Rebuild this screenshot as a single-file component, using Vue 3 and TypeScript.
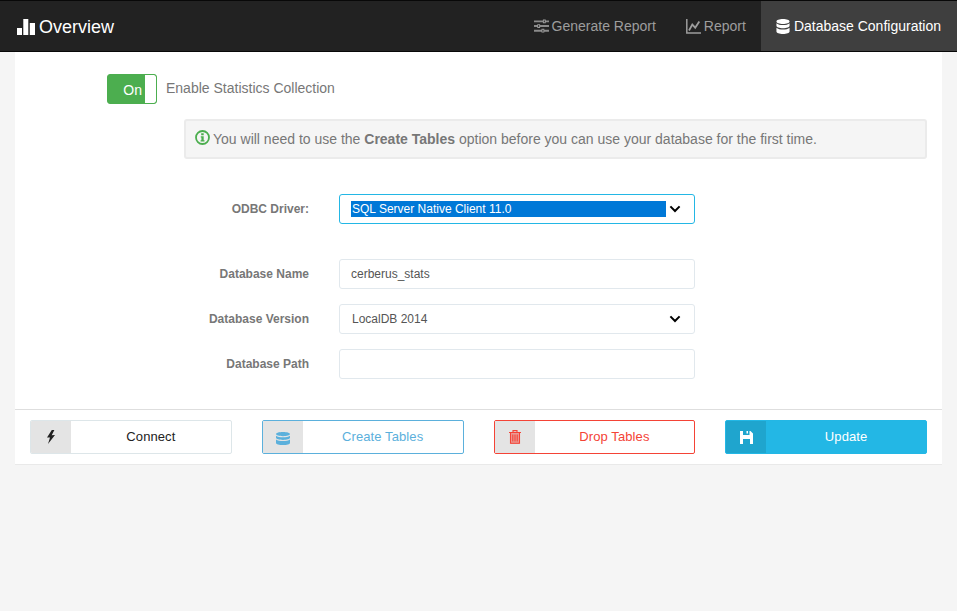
<script setup lang="ts">
const navItems = [
  { label: 'Generate Report', icon: 'sliders', active: false },
  { label: 'Report', icon: 'chart', active: false },
  { label: 'Database Configuration', icon: 'db', active: true },
]
</script>

<template>
  <div class="page">
    <header class="navbar">
      <div class="brand">
        <svg class="brand-icon" viewBox="0 0 18 16"><path d="M0 9h5v7H0zM6.300 0h5v16h-5zM12.800 4H18v12h-5.200z" fill="currentColor" /></svg>
        <span>Overview</span>
      </div>
      <nav class="nav">
        <a v-for="item in navItems" :key="item.label" class="nav-item" :class="{ active: item.active }">
          <svg v-if="item.icon === 'sliders'" class="nav-icon sliders" viewBox="0 0 16 14">
            <path d="M0 1h16v2H0zM0 6h16v2H0zM0 11h16v2H0z" fill="currentColor" opacity=".85" />
            <path d="M9.500 0h3v4h-3zM3.500 5h3v4h-3zM8 10h3v4H8z" fill="currentColor" />
            <path d="M10.500 1h1v2h-1zM4.500 6h1v2h-1zM9 11h1v2H9z" fill="#222" />
          </svg>
          <svg v-else-if="item.icon === 'chart'" class="nav-icon chart" viewBox="0 0 15 15">
            <path d="M.8 0v14.100H15" fill="none" stroke="currentColor" stroke-width="1.500" />
            <path d="M3 11.500 6.300 5.500l2.900 3.200L13.300 2.500" fill="none" stroke="currentColor" stroke-width="1.800" />
          </svg>
          <svg v-else class="nav-icon db" viewBox="0 0 14 16"><path d="M7 0c3.900 0 7 1.100 7 2.600S10.900 5.200 7 5.200 0 4.100 0 2.600 3.100 0 7 0zM0 4.600C1.400 6 4.200 6.500 7 6.500s5.600-.5 7-1.900v2.600C14 8.700 10.900 9.800 7 9.800S0 8.700 0 7.200zM0 9.200c1.400 1.400 4.200 1.900 7 1.900s5.600-.5 7-1.900v4.200C14 14.900 10.900 16 7 16s-7-1.100-7-2.600z" fill="currentColor" /></svg>
          <span>{{ item.label }}</span>
        </a>
      </nav>
    </header>

    <main class="panel">
      <div class="toggle-row">
        <div class="toggle"><span class="toggle-on">On</span><span class="toggle-handle"></span></div>
        <span class="toggle-label">Enable Statistics Collection</span>
      </div>

      <div class="alert">
        <svg class="alert-icon" viewBox="0 0 15 15">
          <circle cx="7.500" cy="7.500" r="6.500" fill="none" stroke="#4cae4f" stroke-width="1.800" />
          <path d="M6.200 3.200h2.500v2H6.200zM5.800 6.300h2.900v4h.8v1.300H5.600v-1.300h.8V7.600h-.6z" fill="#4cae4f" />
        </svg>
        <span>You will need to use the <strong>Create Tables</strong> option before you can use your database for the first time.</span>
      </div>

      <div class="form">
        <div class="row driver-row">
          <label class="field-label">ODBC Driver:</label>
          <div class="select focused">
            <span class="selected">SQL Server Native Client 11.0</span>
            <svg class="chevron" viewBox="0 0 12 8"><path d="M1.400 1.400 6 6l4.600-4.600" fill="none" stroke="#000" stroke-width="2" /></svg>
          </div>
        </div>
        <div class="row">
          <label class="field-label">Database Name</label>
          <input class="input" type="text" value="cerberus_stats" />
        </div>
        <div class="row">
          <label class="field-label">Database Version</label>
          <div class="select">
            <span class="value">LocalDB 2014</span>
            <svg class="chevron" viewBox="0 0 12 8"><path d="M1.400 1.400 6 6l4.600-4.600" fill="none" stroke="#000" stroke-width="2" /></svg>
          </div>
        </div>
        <div class="row">
          <label class="field-label">Database Path</label>
          <input class="input" type="text" />
        </div>
      </div>

      <footer class="actions">
        <button class="btn btn-default">
          <span class="btn-icon">
            <svg class="ic-bolt" viewBox="0 0 10 14"><path d="M5.800 0 1 7.600l3-.2L2 14l7-9-3.300.2L8.400 0z" fill="currentColor" /></svg>
          </span>
          <span class="btn-text">Connect</span>
        </button>
        <button class="btn btn-info">
          <span class="btn-icon">
            <svg class="ic-db" viewBox="0 0 14 16" preserveAspectRatio="none"><path d="M7 0c3.900 0 7 1.100 7 2.600S10.900 5.200 7 5.200 0 4.100 0 2.600 3.100 0 7 0zM0 4.600C1.400 6 4.200 6.500 7 6.500s5.600-.5 7-1.900v2.600C14 8.700 10.900 9.800 7 9.800S0 8.700 0 7.200zM0 9.200c1.400 1.400 4.200 1.900 7 1.900s5.600-.5 7-1.900v4.200C14 14.900 10.900 16 7 16s-7-1.100-7-2.600z" fill="currentColor" /></svg>
          </span>
          <span class="btn-text">Create Tables</span>
        </button>
        <button class="btn btn-danger">
          <span class="btn-icon">
            <svg class="ic-trash" viewBox="0 0 12 14">
              <path d="M1.500 3h9v11h-9z" fill="currentColor" opacity=".45" />
              <path d="M0 2.500h12M4 2.500V.6h4v1.900M1.500 2.500v10.800h9V2.500M3.800 4.500v7M6 4.500v7M8.200 4.500v7" fill="none" stroke="currentColor" stroke-width="1.100" />
            </svg>
          </span>
          <span class="btn-text">Drop Tables</span>
        </button>
        <button class="btn btn-primary">
          <span class="btn-icon">
            <svg class="ic-save" viewBox="0 0 13 13"><path d="M0 0h3v4h6.500V0h1L13 2.500V13h-3V8H3v5H0zM6.500 0h1.500v2.500H6.500z" fill="currentColor" /></svg>
          </span>
          <span class="btn-text">Update</span>
        </button>
      </footer>
    </main>
  </div>
</template>

<style>
html, body { margin: 0; background: #f5f5f5; }
</style>

<style scoped>
.page {
  min-height: 611px;
  background: #f5f5f5;
  font-family: "Liberation Sans", Arial, sans-serif;
  color: #777;
}
.navbar {
  box-sizing: border-box;
  height: 52px;
  display: flex;
  justify-content: space-between;
  background: #222;
  border: 1px solid #080808;
  border-width: 1px 0;
}
.brand {
  display: flex;
  align-items: center;
  gap: 4px;
  padding: 2px 0 0 17px;
  font-size: 18px;
  color: #fff;
}
.brand-icon { width: 18px; height: 16px; }
.nav { display: flex; }
.nav-item {
  display: flex;
  align-items: center;
  gap: 3px;
  padding: 0 15px;
  font-size: 14px;
  color: #9d9d9d;
}
.nav-item.active { background: #3f3f3f; color: #fff; padding-right: 16px; }
.nav-icon { flex: none; }
.sliders { width: 15px; height: 14px; }
.chart { width: 15px; height: 15px; }
.db { width: 14px; height: 15px; margin-right: 1px; }

.panel {
  margin: 0 15px;
  background: #fff;
  border-bottom: 1px solid #e9e9e9;
}
.toggle-row {
  display: flex;
  align-items: center;
  padding: 22px 0 0 92px;
}
.toggle {
  box-sizing: border-box;
  width: 50px;
  height: 30px;
  display: flex;
  background: #4cae4f;
  border: 1px solid #4cae4f;
  border-radius: 3px;
  overflow: hidden;
}
.toggle-on {
  flex: 1;
  display: flex;
  align-items: center;
  justify-content: flex-end;
  padding: 2px 3px 0 0;
  color: #fff;
  font-size: 14px;
}
.toggle-handle { width: 11px; background: #fff; border-radius: 0 2px 2px 0; }
.toggle-label { margin-left: 9px; font-size: 14px; margin-bottom: 2px; }

.alert {
  box-sizing: border-box;
  height: 40px;
  margin: 15px 15px 0 169px;
  padding: 0 9px;
  display: flex;
  align-items: center;
  gap: 3px;
  background: #f5f5f5;
  border: 2px solid #ebebeb;
  border-radius: 3px;
  font-size: 14px;
}
.alert-icon { width: 15px; height: 15px; flex: none; margin-top: -3px; }
.alert strong { font-weight: bold; }

.form { margin-top: 35px; display: flex; flex-direction: column; gap: 15px; }
.row {
  display: grid;
  grid-template-columns: 294px 356px;
  column-gap: 30px;
  align-items: center;
}
.driver-row { margin-bottom: 20px; }
.field-label {
  text-align: right;
  font-size: 12px;
  font-weight: bold;
  color: #777;
}
.input, .select {
  box-sizing: border-box;
  height: 30px;
  width: 356px;
  border: 1px solid #e1e8ed;
  border-radius: 3px;
  background: #fff;
  font-family: inherit;
  font-size: 12px;
  color: #555;
}
.input { padding: 0 11px; outline: none; }
.select { display: flex; align-items: center; padding: 0 13px 0 11px; }
.select.focused { border-color: #23b7e5; }
.selected {
  box-sizing: border-box;
  width: 315px;
  height: 16px;
  line-height: 16px;
  padding-left: 1px;
  background: #0078d7;
  color: #fff;
}
.value { flex: 1; padding-left: 1px; }
.chevron { width: 12px; height: 8px; margin-left: auto; flex: none; }

.actions {
  margin-top: 30px;
  border-top: 1px solid #dedede;
  padding: 10px 15px 10px;
  display: grid;
  grid-template-columns: repeat(4, 1fr);
  column-gap: 30px;
}
.btn {
  box-sizing: border-box;
  height: 34px;
  display: flex;
  align-items: stretch;
  padding: 0;
  border: 1px solid #dde6e9;
  border-radius: 2px;
  background: #fff;
  font-family: inherit;
  font-size: 13px;
  letter-spacing: .1px;
  color: #222;
  overflow: hidden;
}
.btn-icon {
  flex: none;
  width: 40px;
  display: flex;
  align-items: center;
  justify-content: center;
  background: #e4e4e4;
}
.btn-text {
  flex: 1;
  display: flex;
  align-items: center;
  justify-content: center;
  padding-bottom: 2px;
}
.btn-default .btn-icon { color: #222; }
.btn-info { border-color: #5bb0dc; color: #5bb0dc; }
.btn-danger { border-color: #f44336; color: #f44336; }
.btn-primary { border-color: #23b7e5; background: #23b7e5; color: #fff; }
.btn-primary .btn-icon { background: #1fa5ce; }
.ic-bolt { width: 10px; height: 14px; }
.ic-db { width: 14px; height: 13px; margin-top: 2px; }
.ic-trash { width: 12px; height: 14px; }
.ic-save { width: 13px; height: 13px; }
</style>
